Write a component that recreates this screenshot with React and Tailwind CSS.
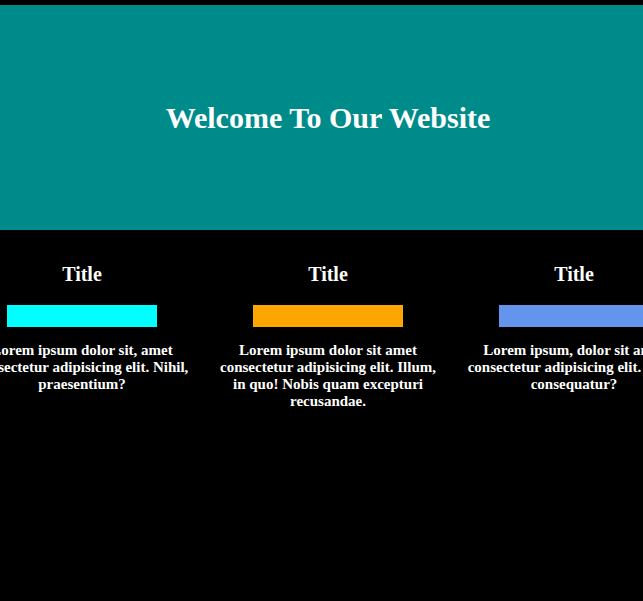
import React from 'react';

const cards = [
  {
    color: 'bg-[#00ffff]',
    text: 'Lorem ipsum dolor sit, amet consectetur adipisicing elit. Nihil, praesentium?',
  },
  {
    color: 'bg-[#ffa500]',
    text: 'Lorem ipsum dolor sit amet consectetur adipisicing elit. Illum, in quo! Nobis quam excepturi recusandae.',
  },
  {
    color: 'bg-[#6495ed]',
    text: 'Lorem ipsum, dolor sit amet consectetur adipisicing elit. Quia, consequatur?',
  },
];

const App = () => {
  return (
    <div className="min-h-screen bg-black overflow-hidden text-white font-['Liberation_Serif',serif] font-bold">
      <div className="w-[656px] pt-[5px]">
        <header className="h-[225px] bg-[#008b8b] flex items-center justify-center">
          <h1 className="text-[30px] leading-[34px]">Welcome To Our Website</h1>
        </header>
        <div className="flex justify-center">
          {cards.map((card, i) => (
            <div key={i} className="w-[246px] shrink-0 flex flex-col items-center px-[13px] text-center">
              <h3 className="mt-[33px] text-[20px] leading-[23px]">Title</h3>
              <div className={`mt-[19px] h-[22px] w-[150px] ${card.color}`} />
              <p className="mt-[15px] text-[15px] leading-[17px]">{card.text}</p>
            </div>
          ))}
        </div>
      </div>
    </div>
  );
};

export default App;
